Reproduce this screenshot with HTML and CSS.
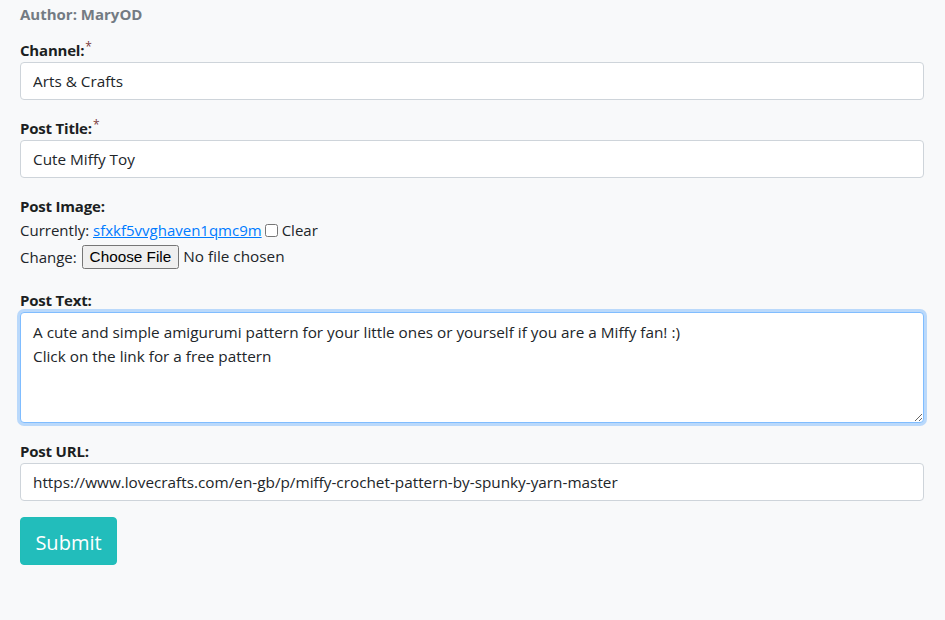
FILE: index.html
```html
<!DOCTYPE html>
<html lang="en">
<head>
<meta charset="utf-8">
<title>Edit Post</title>
<link rel="stylesheet" href="styles.css">
</head>
<body>
<main class="page">
  <p class="author">Author: MaryOD</p>
  <form class="post-form">
    <div class="group">
      <label class="label" for="channel">Channel:<span class="req">*</span></label>
      <input class="control" id="channel" type="text" value="Arts &amp; Crafts">
    </div>
    <div class="group">
      <label class="label" for="title">Post Title:<span class="req">*</span></label>
      <input class="control" id="title" type="text" value="Cute Miffy Toy">
    </div>
    <div class="group">
      <label class="label">Post Image:</label>
      <div class="line">Currently: <a href="#" class="link">sfxkf5vvghaven1qmc9m</a> <input type="checkbox" id="clear" class="check"><label for="clear" class="clear">Clear</label></div>
      <div class="line line-change">Change: <input type="file" class="file"></div>
    </div>
    <div class="group">
      <label class="label" for="text">Post Text:</label>
      <textarea class="control area" id="text" spellcheck="false">A cute and simple amigurumi pattern for your little ones or yourself if you are a Miffy fan! :)
Click on the link for a free pattern</textarea>
    </div>
    <div class="group">
      <label class="label" for="url">Post URL:</label>
      <input class="control" id="url" type="text" value="https://www.lovecrafts.com/en-gb/p/miffy-crochet-pattern-by-spunky-yarn-master">
    </div>
    <button type="button" class="submit">Submit</button>
  </form>
</main>
</body>
</html>
```
FILE: styles.css
```css
html, body {
  margin: 0;
  padding: 0;
  background: #f8f9fa;
}
body {
  font-family: "Open Sans", "Noto Sans", sans-serif;
  font-size: 15.3px;
  line-height: 24px;
  color: #212529;
}
.page {
  padding: 2px 21px 0 20px;
}
.author {
  margin: 0 0 12px;
  color: #737b83;
  font-weight: 700;
  font-size: 15px;
  line-height: 24px;
}
.post-form {
  display: flex;
  flex-direction: column;
}
.group {
  display: flex;
  flex-direction: column;
  margin-bottom: 16px;
}
.label {
  font-weight: 700;
  font-size: 15px;
  line-height: 24px;
  letter-spacing: -0.2px;
  color: #1c1f22;
}
.req {
  font-weight: 400;
  font-size: 12px;
  color: #7a3a3a;
  vertical-align: top;
  line-height: 18px;
  margin-left: 1px;
}
.control {
  box-sizing: border-box;
  width: 100%;
  height: 38px;
  padding: 6px 12px;
  font-family: inherit;
  font-size: 15.3px;
  line-height: 24px;
  color: #212529;
  background: #fff;
  border: 1px solid #ced4da;
  border-radius: 4px;
  margin: 0;
}
.area {
  height: 111px;
  resize: vertical;
  border-color: #80bdff;
  box-shadow: 0 0 0 3px rgba(0, 123, 255, 0.25);
  outline: none;
  display: block;
  padding-top: 7px;
}
.line {
  font-size: 15px;
  line-height: 24px;
  display: flex;
  align-items: center;
  white-space: pre;
}
.line-change {
  height: 30px;
}
.link {
  color: #007bff;
  text-decoration: underline;
}
.check {
  margin: 0 4px 0 3px;
  width: 13px;
  height: 13px;
}
.clear {
  font-weight: 400;
}
.file {
  font-family: inherit;
  font-size: 15.3px;
  margin-left: 1px;
}
.submit {
  align-self: flex-start;
  width: 97px;
  height: 48px;
  padding: 3px 0 0;
  border: 1px solid #20bdb8;
  border-radius: 4px;
  background: #22bdbb;
  color: #fff;
  font-family: inherit;
  font-size: 20px;
  line-height: 30px;
}
```
